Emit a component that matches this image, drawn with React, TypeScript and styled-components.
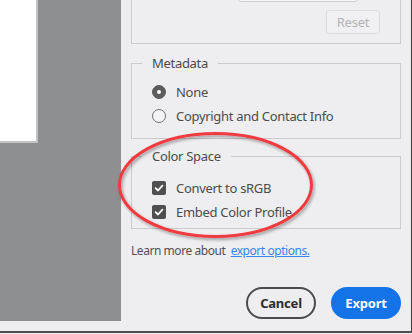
import React from 'react'
import styled, { createGlobalStyle } from 'styled-components'

const GlobalStyle = createGlobalStyle`
  html, body {
    margin: 0;
    padding: 0;
    background: #eeeef0;
  }
  body {
    font-family: "Noto Sans", "Open Sans", sans-serif;
    -webkit-font-smoothing: antialiased;
  }
`

const Page = styled.div`
  position: relative;
  width: 412px;
  height: 334px;
  display: flex;
  flex-direction: column;
  background: #eeeef0;
  overflow: hidden;
`

const Frame = styled.div`
  display: flex;
  flex-direction: column;
  height: 331px;
  border-right: 1px solid #3b3b3b;
`

const Main = styled.div`
  display: flex;
  height: 321px;
`

const Canvas = styled.div`
  width: 121px;
  flex-shrink: 0;
  background: #8e8f91;
`

const Artboard = styled.div`
  width: 36px;
  height: 141px;
  background: #ffffff;
  border-right: 2px solid #c3c4c6;
  border-bottom: 2px solid #c3c4c6;
`

const BottomLine = styled.div`
  height: 2px;
  background: #4e4e4e;
`

const Panel = styled.div`
  flex: 1;
  display: flex;
  flex-direction: column;
  padding: 0 10px 2px 10px;
  color: #4b4b4b;
  font-size: 13px;
  letter-spacing: -0.3px;
`

const TopGroup = styled.div`
  margin-top: -22px;
  height: 66px;
  box-sizing: border-box;
  border: 1px solid #cbcbcd;
  border-top: none;
  display: flex;
  flex-direction: column;
  align-items: flex-end;
  padding: 0 20px 9px 0;
`

const SizeInput = styled.div`
  width: 120px;
  height: 24px;
  box-sizing: border-box;
  margin-right: 22px;
  background: #f8f8f8;
  border: 1px solid #cfcfd1;
  border-radius: 3px;
`

const ResetButton = styled.button`
  margin-top: 8px;
  width: 54px;
  height: 24px;
  box-sizing: border-box;
  background: #f0f0f2;
  border: 1px solid #dcdcde;
  border-radius: 3px;
  color: #b3b3b3;
  font-family: inherit;
  font-size: 13px;
  letter-spacing: -0.2px;
  padding: 0;
`

const Group = styled.fieldset<{ $top: number; $bottom: number }>`
  margin: ${p => p.$top}px 0 0 0;
  padding: 0 0 ${p => p.$bottom}px 20px;
  border: 1px solid #cbcbcd;
  min-inline-size: auto;
  display: flex;
  flex-direction: column;
`

const Legend = styled.legend`
  margin-left: -10px;
  padding: 0 10px;
  line-height: 18px;
  color: #4b4b4b;
`

const Options = styled.div<{ $pad: number }>`
  padding-top: ${p => p.$pad}px;
  display: flex;
  flex-direction: column;
`

const OptionRow = styled.label<{ $h: number }>`
  display: flex;
  align-items: center;
  gap: 10px;
  height: ${p => p.$h}px;
  color: #4b4b4b;
`

const Radio = styled.span<{ $on?: boolean }>`
  width: 14px;
  height: 14px;
  box-sizing: border-box;
  border-radius: 50%;
  flex-shrink: 0;
  position: relative;
  background: ${p => (p.$on ? '#5c5c5c' : '#f3f3f5')};
  border: 1px solid ${p => (p.$on ? '#5c5c5c' : '#707070')};
  &::after {
    content: '';
    display: ${p => (p.$on ? 'block' : 'none')};
    position: absolute;
    left: 4px;
    top: 4px;
    width: 4px;
    height: 4px;
    border-radius: 50%;
    background: #ffffff;
  }
`

const Check = styled.span`
  width: 14px;
  height: 14px;
  border-radius: 2px;
  background: #4f4f4f;
  flex-shrink: 0;
  display: flex;
  align-items: center;
  justify-content: center;
`

const LearnMore = styled.p`
  margin: 13px 0 0 0;
  line-height: 18px;
  font-size: 12px;
  letter-spacing: -0.45px;
  color: #505050;
  white-space: pre;
`

const Link = styled.a`
  color: #3b86ee;
  text-decoration: underline;
`

const Actions = styled.div`
  margin-top: auto;
  display: flex;
  justify-content: flex-end;
  gap: 15px;
`

const ActionButton = styled.button<{ $primary?: boolean }>`
  width: 70px;
  height: 32px;
  box-sizing: border-box;
  border-radius: 16px;
  font-family: inherit;
  font-size: 13px;
  font-weight: 700;
  letter-spacing: -0.2px;
  padding: 0;
  border: 2px solid ${p => (p.$primary ? '#1473e6' : '#4b4b4b')};
  background: ${p => (p.$primary ? '#1473e6' : 'transparent')};
  color: ${p => (p.$primary ? '#ffffff' : '#2c2c2c')};
`

const Annotation = styled.svg`
  position: absolute;
  left: 110px;
  top: 125px;
  width: 215px;
  height: 122px;
  overflow: visible;
  pointer-events: none;
`

const CheckMark = () => (
  <svg width="10" height="10" viewBox="0 0 10 10">
    <path d="M1.6 5.2 L4 7.5 L8.4 2.6" fill="none" stroke="#fff" strokeWidth="1.8" strokeLinecap="round" strokeLinejoin="round" />
  </svg>
)

export default function App() {
  return (
    <Page>
      <GlobalStyle />
      <Frame>
        <Main>
          <Canvas>
            <Artboard />
          </Canvas>
          <Panel>
            <TopGroup>
              <SizeInput />
              <ResetButton disabled>Reset</ResetButton>
            </TopGroup>

            <Group $top={10} $bottom={10}>
              <Legend>Metadata</Legend>
              <Options $pad={8}>
                <OptionRow $h={24}>
                  <Radio $on />
                  None
                </OptionRow>
                <OptionRow $h={24}>
                  <Radio />
                  Copyright and Contact Info
                </OptionRow>
              </Options>
            </Group>

            <Group $top={8} $bottom={5}>
              <Legend>Color Space</Legend>
              <Options $pad={11}>
                <OptionRow $h={24}>
                  <Check>
                    <CheckMark />
                  </Check>
                  Convert to sRGB
                </OptionRow>
                <OptionRow $h={23}>
                  <Check>
                    <CheckMark />
                  </Check>
                  Embed Color Profile
                </OptionRow>
              </Options>
            </Group>

            <LearnMore>
              {'Learn more about  '}
              <Link href="#">export options.</Link>
            </LearnMore>

            <Actions>
              <ActionButton>Cancel</ActionButton>
              <ActionButton $primary>Export</ActionButton>
            </Actions>
          </Panel>
        </Main>
      </Frame>
      <BottomLine />

      <Annotation viewBox="0 0 215 122">
        <defs>
          <filter id="shade" x="-10%" y="-10%" width="120%" height="130%">
            <feDropShadow dx="1.5" dy="2" stdDeviation="1.6" floodColor="#000" floodOpacity="0.35" />
          </filter>
        </defs>
        <ellipse cx="105.5" cy="60" rx="96" ry="51.5" fill="none" stroke="#ef3b3f" strokeWidth="3" filter="url(#shade)" />
      </Annotation>
    </Page>
  )
}
